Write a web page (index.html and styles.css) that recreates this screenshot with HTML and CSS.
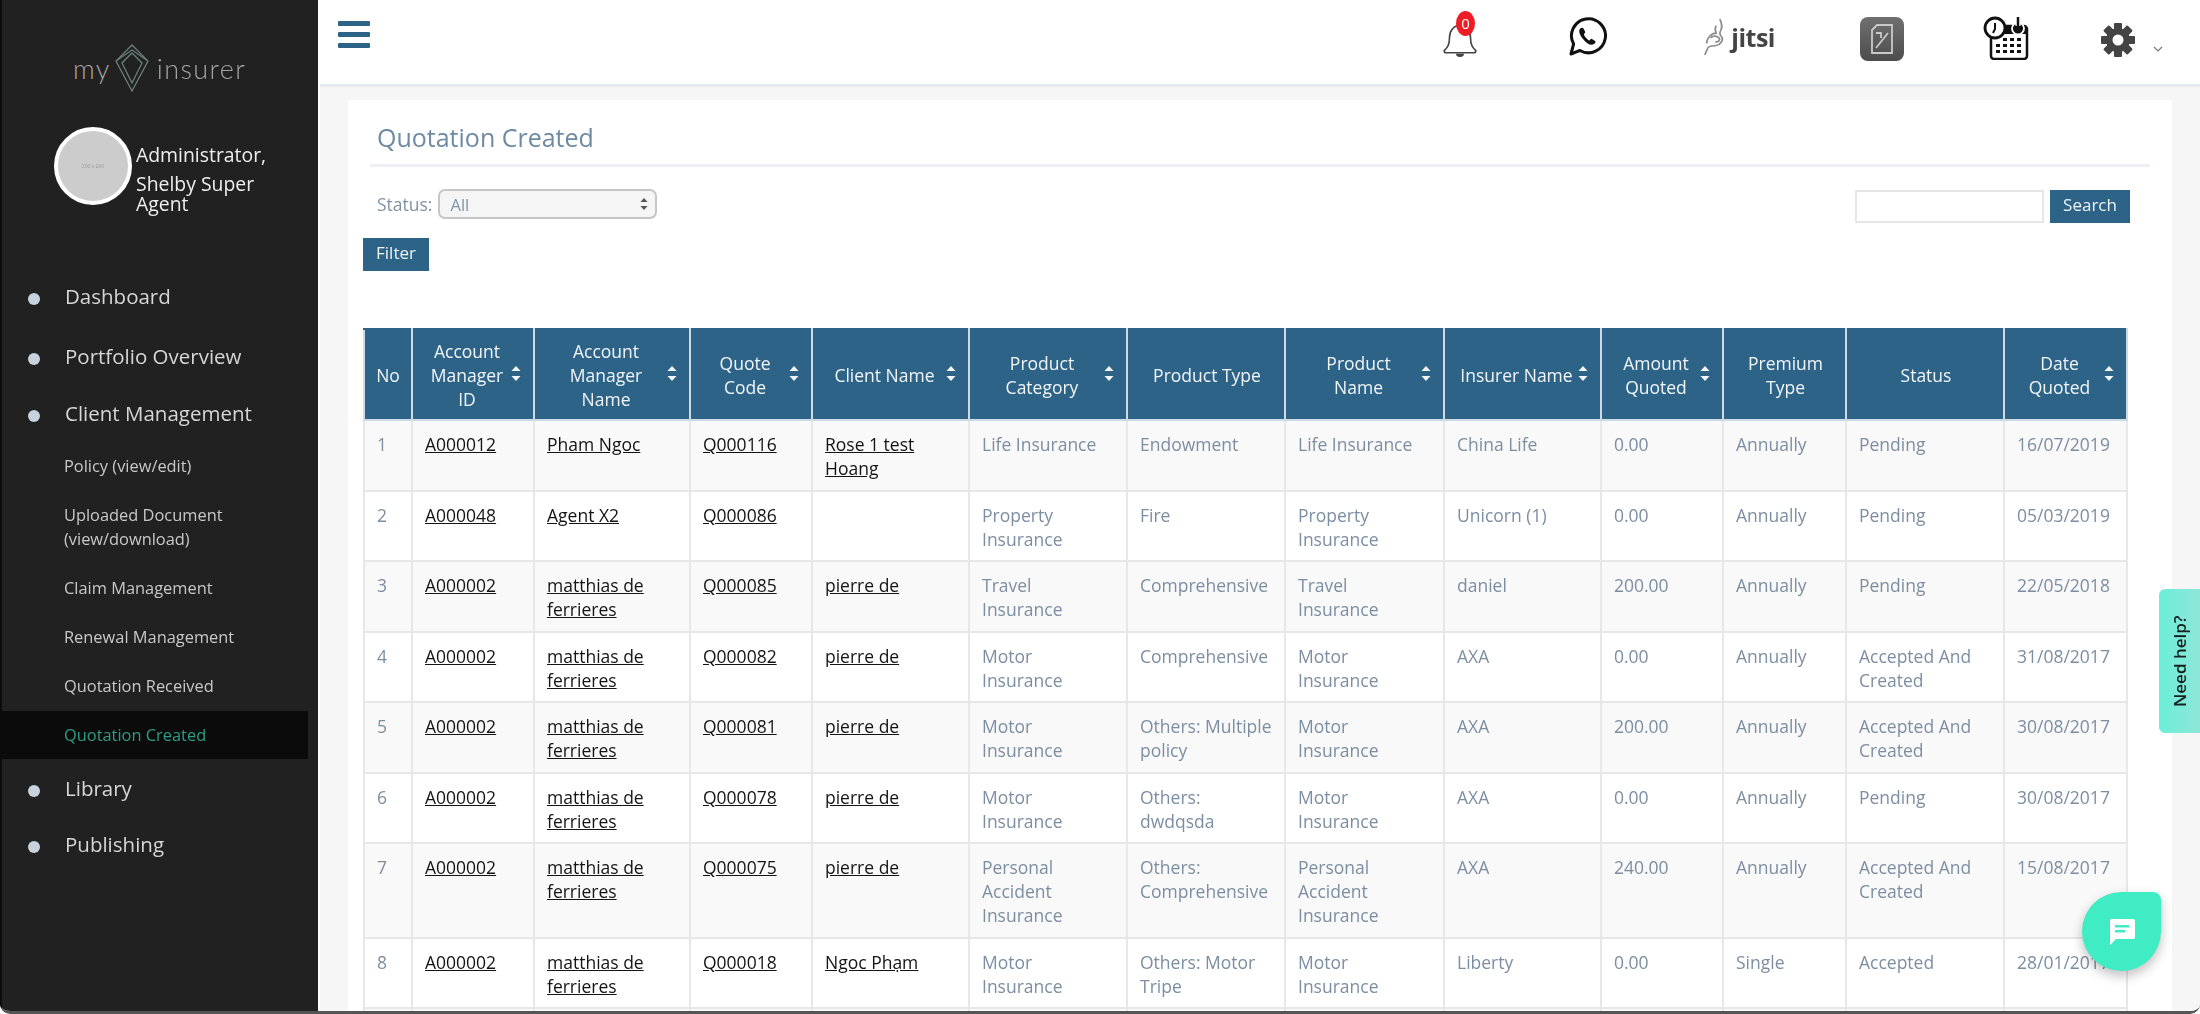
FILE: index.html
```html
<!DOCTYPE html>
<html lang="en">
<head>
<meta charset="utf-8">
<title>Quotation Created</title>
<link rel="stylesheet" href="styles.css">
</head>
<body>
<svg class="defs" width="0" height="0" aria-hidden="true"><defs>
  <g id="sort"><path d="M5 0 9.500 5H.5z"/><path d="M5 15 9.500 10H.5z"/></g>
</defs></svg>
<div class="app">
  <aside class="sidebar">
    <div class="logo">
      <span>my</span>
      <svg class="logo-mark" viewBox="0 0 34 48" fill="none" stroke="#6a7f7a" stroke-width="1.300"><path d="M17 1 33 17 17 47 1 17z"/><path d="M17 9 27 19 17 39 7 19z"/><path d="M1 17 17 6 33 17"/></svg>
      <span>insurer</span>
    </div>
    <div class="profile">
      <div class="avatar"><span>200 x 200</span></div>
      <div class="profile-name"><p>Administrator,</p><p class="name-2">Shelby Super Agent</p></div>
    </div>
    <nav class="nav">
      <a class="nav-item nav-dashboard">Dashboard</a>
      <a class="nav-item nav-portfolio">Portfolio Overview</a>
      <a class="nav-item nav-client">Client Management</a>
      <a class="sub-item">Policy (view/edit)</a>
      <a class="sub-item">Uploaded Document (view/download)</a>
      <a class="sub-item">Claim Management</a>
      <a class="sub-item">Renewal Management</a>
      <a class="sub-item">Quotation Received</a>
      <a class="sub-item active">Quotation Created</a>
      <a class="nav-item nav-library">Library</a>
      <a class="nav-item nav-publishing">Publishing</a>
    </nav>
  </aside>
  <main class="main">
    <header class="topbar">
      <div class="hamburger"><i></i><i></i><i></i></div>
      <div class="tools">
        <div class="tool tool-bell">
          <svg width="38" height="44" viewBox="0 0 36 40" fill="none" stroke="#444" stroke-width="1.500"><path d="M3 32c3-3 5-5 5-12 0-7 4-12 10-12s10 5 10 12c0 7 2 9 5 12 0 1-1 2-2 2H5c-1 0-2-1-2-2z"/><path d="M15 35c0 3 6 3 6 0" fill="#444"/></svg>
          <span class="badge">0</span>
        </div>
        <svg class="tool tool-wa" width="40" height="40" viewBox="0 0 40 40" fill="none"><path d="M4 37l2.600-10A17 17 0 1 1 13 33.500z" stroke="#111" stroke-width="3" stroke-linejoin="round"/><path d="M14 11c-3 2-2 6 2 11s8 7 11 5c1.500-1 2-2 1-3l-3-2c-1-.5-1.500.5-2.500 1.500-1 .5-6-5-5.500-6.500 1-1 1.500-1.500 1-2.500l-1.500-3c-.7-1-1.500-1-2.500-.5z" fill="#111"/></svg>
        <div class="tool tool-jitsi">
          <svg width="30" height="40" viewBox="0 0 30 40" fill="none" stroke="#8d8d8d" stroke-width="1.800"><path d="M20 1c2 5 3 8 1 12-2 3-1 5 1 7 2 3-1 8-6 9-4 1-8 0-9 3l-3 7"/><path d="M16 8c-2 4-1 6 0 8-5 0-10 5-10 11"/><path d="M10 21c3-3 7-2 9 0s-1 5-4 4"/></svg>
          <span class="jitsi-text">jitsi</span>
        </div>
        <div class="tool tool-box">
          <svg width="24" height="30" viewBox="0 0 24 30" fill="none" stroke="#c9c9c9" stroke-width="1.800"><path d="M2 6 7 1h15v28H2z"/><path d="M6 24 18 9M6 9h5v5"/></svg>
        </div>
        <svg class="tool tool-cal" width="46" height="44" viewBox="0 0 46 44" fill="none"><rect x="8" y="10" width="36" height="33" rx="3" stroke="#111" stroke-width="2.500" fill="#fff"/><rect x="8" y="10" width="36" height="8" fill="#111"/><g fill="#111"><rect x="20" y="22" width="4" height="3"/><rect x="27" y="22" width="4" height="3"/><rect x="34" y="22" width="4" height="3"/><rect x="13" y="28" width="4" height="3"/><rect x="20" y="28" width="4" height="3"/><rect x="27" y="28" width="4" height="3"/><rect x="34" y="28" width="4" height="3"/><rect x="13" y="34" width="4" height="3"/><rect x="20" y="34" width="4" height="3"/><rect x="27" y="34" width="4" height="3"/><rect x="34" y="34" width="4" height="3"/></g><circle cx="12" cy="12" r="10" fill="#fff" stroke="#111" stroke-width="2.800"/><path d="M12 7v6l-2 4" stroke="#111" stroke-width="2"/><path d="M31 8a6 6 0 1 0 8 0" stroke="#fff" stroke-width="1.800"/><path d="M35 2v8" stroke="#fff" stroke-width="5"/><path d="M35 1v9" stroke="#111" stroke-width="2.500"/></svg>
        <svg class="tool tool-gear" width="36" height="36" viewBox="0 0 36 36"><g fill="#444"><circle cx="18" cy="18" r="12"/><g id="t"><rect x="14" y="1" width="8" height="8" rx="1"/><rect x="14" y="27" width="8" height="8" rx="1"/></g><use href="#t" transform="rotate(45 18 18)"/><use href="#t" transform="rotate(90 18 18)"/><use href="#t" transform="rotate(135 18 18)"/></g><circle cx="18" cy="18" r="5.500" fill="#fff"/></svg>
        <svg class="tool tool-chev" width="12" height="8" viewBox="0 0 12 8" fill="none" stroke="#777" stroke-width="1.200"><path d="M2 2l4 4 4-4"/></svg>
      </div>
    </header>
    <div class="content">
      <section class="card">
        <h1 class="title"><span>Quotation Created</span></h1>
        <div class="filters">
          <label class="status">Status:
            <span class="select-wrap">
              <select class="select"><option>All</option></select>
              <svg class="select-arrows" width="8" height="14" viewBox="0 0 10 15" fill="#555"><use href="#sort"/></svg>
            </span>
          </label>
          <div class="search"><input class="search-input" type="text"><button class="btn btn-search">Search</button></div>
        </div>
        <button class="btn btn-filter">Filter</button>
        <table class="grid">
          <colgroup><col class="c48"><col class="c122"><col class="c156"><col class="c122"><col class="c157"><col class="c158"><col class="c158"><col class="c159"><col class="c157"><col class="c122"><col class="c123"><col class="c158"><col class="c123"></colgroup>
          <thead><tr>
            <th>No</th>
            <th><div class="th-in"><span>Account<br>Manager<br>ID</span><svg class="sort" viewBox="0 0 10 15"><use href="#sort"/></svg></div></th>
            <th><div class="th-in"><span>Account<br>Manager<br>Name</span><svg class="sort" viewBox="0 0 10 15"><use href="#sort"/></svg></div></th>
            <th><div class="th-in"><span>Quote<br>Code</span><svg class="sort" viewBox="0 0 10 15"><use href="#sort"/></svg></div></th>
            <th><div class="th-in"><span>Client Name</span><svg class="sort" viewBox="0 0 10 15"><use href="#sort"/></svg></div></th>
            <th><div class="th-in"><span>Product<br>Category</span><svg class="sort" viewBox="0 0 10 15"><use href="#sort"/></svg></div></th>
            <th>Product Type</th>
            <th><div class="th-in"><span>Product<br>Name</span><svg class="sort" viewBox="0 0 10 15"><use href="#sort"/></svg></div></th>
            <th><div class="th-in"><span>Insurer Name</span><svg class="sort" viewBox="0 0 10 15"><use href="#sort"/></svg></div></th>
            <th><div class="th-in"><span>Amount<br>Quoted</span><svg class="sort" viewBox="0 0 10 15"><use href="#sort"/></svg></div></th>
            <th>Premium<br>Type</th>
            <th>Status</th>
            <th><div class="th-in"><span>Date<br>Quoted</span><svg class="sort" viewBox="0 0 10 15"><use href="#sort"/></svg></div></th>
          </tr></thead>
          <tbody>
            <tr><td>1</td><td><a>A000012</a></td><td><a>Pham Ngoc</a></td><td><a>Q000116</a></td><td><a>Rose 1 test Hoang</a></td><td>Life Insurance</td><td>Endowment</td><td>Life Insurance</td><td>China Life</td><td>0.00</td><td>Annually</td><td>Pending</td><td>16/07/2019</td></tr>
            <tr><td>2</td><td><a>A000048</a></td><td><a>Agent X2</a></td><td><a>Q000086</a></td><td></td><td>Property Insurance</td><td>Fire</td><td>Property Insurance</td><td>Unicorn (1)</td><td>0.00</td><td>Annually</td><td>Pending</td><td>05/03/2019</td></tr>
            <tr><td>3</td><td><a>A000002</a></td><td><a>matthias de ferrieres</a></td><td><a>Q000085</a></td><td><a>pierre de</a></td><td>Travel Insurance</td><td>Comprehensive</td><td>Travel Insurance</td><td>daniel</td><td>200.00</td><td>Annually</td><td>Pending</td><td>22/05/2018</td></tr>
            <tr><td>4</td><td><a>A000002</a></td><td><a>matthias de ferrieres</a></td><td><a>Q000082</a></td><td><a>pierre de</a></td><td>Motor Insurance</td><td>Comprehensive</td><td>Motor Insurance</td><td>AXA</td><td>0.00</td><td>Annually</td><td>Accepted And Created</td><td>31/08/2017</td></tr>
            <tr><td>5</td><td><a>A000002</a></td><td><a>matthias de ferrieres</a></td><td><a>Q000081</a></td><td><a>pierre de</a></td><td>Motor Insurance</td><td>Others: Multiple policy</td><td>Motor Insurance</td><td>AXA</td><td>200.00</td><td>Annually</td><td>Accepted And Created</td><td>30/08/2017</td></tr>
            <tr><td>6</td><td><a>A000002</a></td><td><a>matthias de ferrieres</a></td><td><a>Q000078</a></td><td><a>pierre de</a></td><td>Motor Insurance</td><td>Others: dwdqsda</td><td>Motor Insurance</td><td>AXA</td><td>0.00</td><td>Annually</td><td>Pending</td><td>30/08/2017</td></tr>
            <tr><td>7</td><td><a>A000002</a></td><td><a>matthias de ferrieres</a></td><td><a>Q000075</a></td><td><a>pierre de</a></td><td>Personal Accident Insurance</td><td>Others: Comprehensive</td><td>Personal Accident Insurance</td><td>AXA</td><td>240.00</td><td>Annually</td><td>Accepted And Created</td><td>15/08/2017</td></tr>
            <tr><td>8</td><td><a>A000002</a></td><td><a>matthias de ferrieres</a></td><td><a>Q000018</a></td><td><a>Ngoc Phạm</a></td><td>Motor Insurance</td><td>Others: Motor Tripe</td><td>Motor Insurance</td><td>Liberty</td><td>0.00</td><td>Single</td><td>Accepted</td><td>28/01/2017</td></tr>
            <tr><td>&nbsp;</td><td></td><td></td><td></td><td></td><td></td><td></td><td></td><td></td><td></td><td></td><td></td><td></td></tr>
          </tbody>
        </table>
      </section>
    </div>
  </main>
  <div class="help">Need help?</div>
  <div class="chat">
    <svg width="30" height="30" viewBox="0 0 30 30"><path d="M4 2h22a2 2 0 0 1 2 2v16a2 2 0 0 1-2 2H9l-6 6V4a2 2 0 0 1 1-2z" fill="#fff"/><path d="M8 8h14v2.500H8zM8 13h10v2.500H8z" fill="#40ecc4"/></svg>
  </div>
</div>
</body>
</html>
```

FILE: styles.css
```css
* { box-sizing: border-box; }
html, body { margin: 0; height: 1014px; overflow: hidden; background: #fff; }
body { font-family: "Open Sans", "Liberation Sans", sans-serif; }
.defs { position: absolute; }
.app {
  position: relative;
  display: flex;
  height: 1014px;
  overflow: hidden;
  border-bottom: 3px solid #555;
  border-radius: 0 0 10px 10px;
  filter: blur(0.7px);
}

/* sidebar */
.sidebar {
  flex: 0 0 318px;
  background: #212121;
  border-left: 2px solid #0b0b0b;
  color: #ddd;
}
.logo {
  display: flex;
  align-items: center;
  gap: 5px;
  height: 48px;
  margin: 44px 0 0 71px;
  font-family: Lato, "Open Sans", sans-serif;
  font-weight: 300;
  font-size: 27px;
  letter-spacing: 1.4px;
  color: #a4a4a4;
}
.logo-mark { width: 36px; height: 48px; margin-right: 2px; margin-left: -2px; }
.profile { display: flex; margin: 35px 0 0 52px; gap: 4px; }
.avatar {
  flex: 0 0 78px;
  height: 78px;
  border-radius: 50%;
  background: #ccc;
  border: 4px solid #fff;
  display: flex;
  align-items: center;
  justify-content: center;
  font-size: 5px;
  color: #999;
}
.profile-name { width: 140px; margin-top: 18px; font-size: 19.400px; line-height: 20px; color: #eee; }
.profile-name p { margin: 0; }
.profile-name .name-2 { margin-top: 9px; }
.nav { display: block; margin-top: 68px; }
.nav-item {
  display: block;
  position: relative;
  padding-left: 63px;
  font-size: 20.500px;
  line-height: 28px;
  color: #d6d6d6;
}
.nav-item::before {
  content: "";
  position: absolute;
  left: 26px;
  top: 11px;
  width: 12px;
  height: 12px;
  border-radius: 50%;
  background: #c6d3df;
}
.nav-portfolio { margin-top: 32px; }
.nav-client { margin-top: 29px; }
.nav-library { margin-top: 15px; }
.nav-publishing { margin-top: 28px; }
.sub-item {
  display: block;
  width: 306px;
  padding: 12px 30px 12px 62px;
  font-size: 16.400px;
  line-height: 24px;
  color: #c8c8c8;
}
.nav-client + .sub-item { margin-top: 15px; }
.sub-item + .sub-item { margin-top: 1px; }
.sub-item.active { background: #0b0b0b; color: #2f9d85; }

/* main */
.main { flex: 1; min-width: 0; background: #f6f6f7; border-left: 2px solid #fff; }
.topbar {
  display: flex;
  align-items: center;
  justify-content: space-between;
  height: 87px;
  padding: 0 0 0 18px;
  background: #fff;
  border-bottom: 3px solid #e7ecf1;
}
.hamburger { display: flex; flex-direction: column; gap: 6px; width: 32px; margin-top: -16px; }
.hamburger i { display: block; height: 5px; background: #2e6388; border-radius: 1px; }
.tools { display: flex; align-items: center; height: 84px; }
.tool { flex: none; }
.tool-bell { position: relative; width: 38px; height: 44px; margin-right: 88px; margin-top: -8px; }
.badge {
  position: absolute;
  left: 15px;
  top: -5px;
  width: 19px;
  height: 25px;
  border-radius: 50%;
  background: #ee1c25;
  color: #fff;
  font-size: 15px;
  line-height: 25px;
  text-align: center;
}
.tool-wa { margin-right: 94px; margin-top: -10px; }
.tool-jitsi { display: flex; align-items: center; width: 74px; margin-right: 85px; margin-top: -10px; }
.jitsi-text { font-weight: 700; font-size: 25px; color: #444; letter-spacing: -0.5px; margin-left: 2px; }
.tool-box {
  width: 44px;
  height: 44px;
  margin-right: 79px;
  margin-top: -7px;
  border-radius: 8px;
  background: linear-gradient(#707070, #4c4c4c);
  display: flex;
  align-items: center;
  justify-content: center;
}
.tool-cal { margin-right: 71px; margin-top: -8px; }
.tool-gear { margin-right: 16px; margin-top: -4px; }
.tool-chev { margin-right: 36px; margin-top: 14px; }

.content { padding: 13px 28px 0 28px; }
.card { background: #fff; padding: 0 45px 0 16px; height: 1000px; }
.title {
  margin: 0 -23px 0 6px;
  padding-left: 7px;
  height: 67px;
  border-bottom: 3px solid #eceff3;
  font-weight: 400;
  font-size: 25px;
  line-height: 74px;
  color: #6e8aa3;
}
.filters { display: flex; justify-content: space-between; margin: 22px -3px 0 13px; }
.status { display: flex; align-items: center; gap: 6px; height: 30px; font-size: 17.500px; color: #7f93a6; }
.select-wrap { position: relative; display: block; }
.select {
  display: block;
  appearance: none;
  width: 219px;
  height: 30px;
  padding: 0 10px;
  background: #f5f5f5;
  border: 2px solid #c6c6c6;
  border-radius: 7px;
  font: 16.500px "Open Sans", sans-serif;
  color: #7f93a6;
}
.select-arrows { position: absolute; right: 9px; top: 8px; }
.search { display: flex; gap: 6px; margin-top: 1px; }
.search-input { width: 189px; height: 33px; border: 2px solid #e6e6e6; background: #fff; }
.btn {
  display: block;
  height: 33px;
  border: 1px solid #2e6388;
  background: #2e6388;
  color: #eef3f6;
  font: 17px/26px "Open Sans", sans-serif;
  padding: 0 0 4px;
}
.btn-search { width: 80px; }
.btn-filter { width: 66px; margin: 15px 0 0 -1px; }

/* table */
.grid {
  table-layout: fixed;
  width: 1763px;
  margin: 57px 0 0 -1px;
  border-collapse: collapse;
  font-size: 17.500px;
  line-height: 24px;
  color: #7c8ea2;
}
.c48 { width: 48px; } .c122 { width: 122px; } .c123 { width: 123px; } .c156 { width: 156px; }
.c157 { width: 157px; } .c158 { width: 158px; } .c159 { width: 159px; }
.grid th {
  padding: 8.500px 12px 8.500px 14px;
  background: #2e6388;
  border: 2px solid #cfdbe4;
  border-top-color: #2e6388;
  color: #f1f5f8;
  font-weight: 500;
  text-align: center;
}
.grid th:first-child { padding: 8.500px 2px; }
.th-in { display: flex; align-items: center; gap: 4px; }
.th-in span { flex: 1; }
.sort { flex: none; width: 10px; height: 15px; fill: #f1f5f8; margin-top: -2px; }
.grid td { padding: 11px 12px 9.500px 12px; border: 2px solid #e7e7e7; vertical-align: top; }
.grid tbody tr:nth-child(odd) { background: #f9f9f9; }
.grid a { color: #141414; text-decoration: underline; }

/* floating */
.help {
  position: absolute;
  right: 0;
  top: 589px;
  width: 41px;
  height: 144px;
  background: linear-gradient(90deg, #8fe6d8, #6aeed8);
  border-radius: 0 6px 6px 0;
  writing-mode: vertical-rl;
  rotate: 180deg;
  display: flex;
  align-items: center;
  justify-content: center;
  color: #14211f;
  font-size: 17px;
  font-weight: 600;
}
.chat {
  position: absolute;
  left: 2082px;
  top: 892px;
  width: 79px;
  height: 79px;
  border-radius: 50% 8px 50% 50%;
  background: #40ecc4;
  box-shadow: 0 5px 12px rgba(0, 0, 0, .25);
  display: flex;
  align-items: center;
  justify-content: center;
}
```
